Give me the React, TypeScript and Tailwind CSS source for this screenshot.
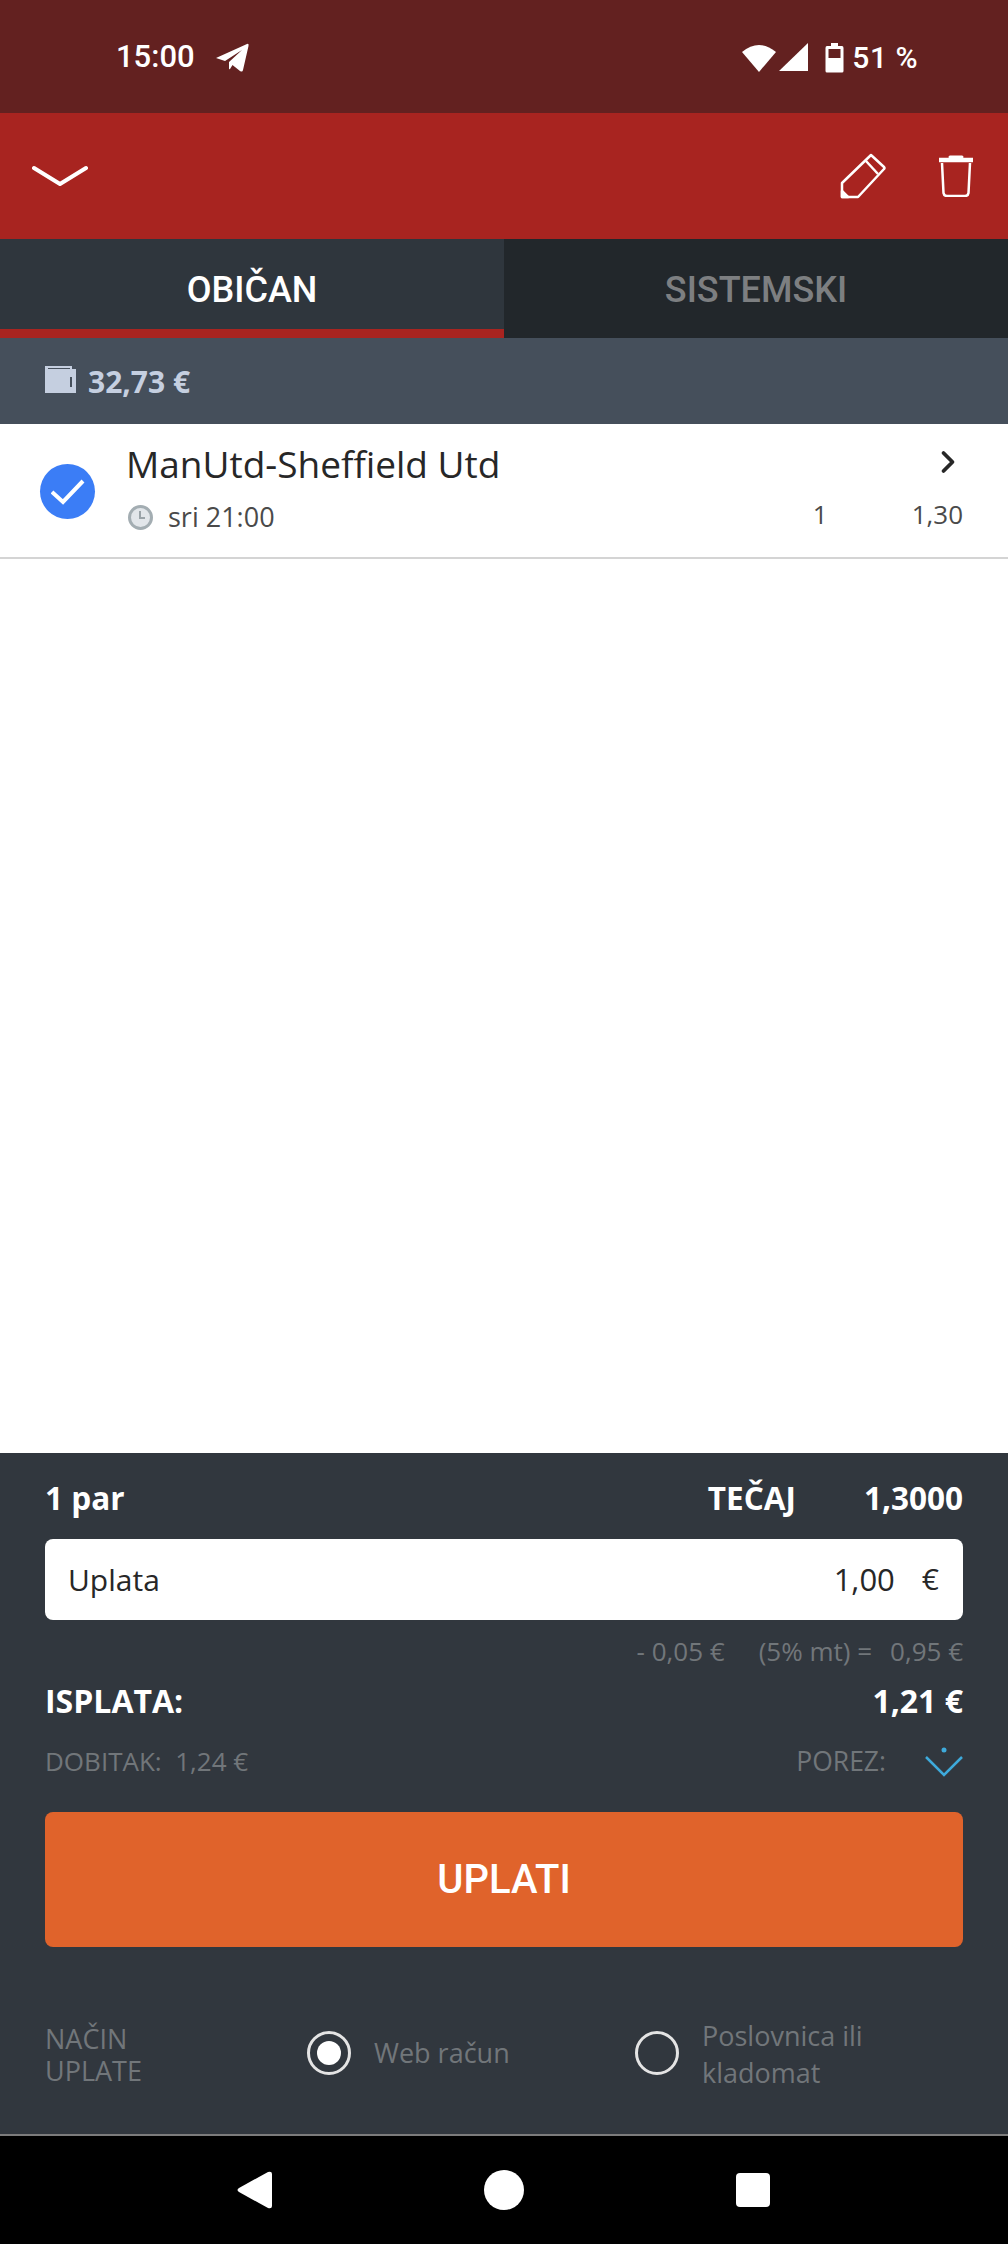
import { ChevronRight } from "lucide-react";

const openSans = "font-['Open_Sans',sans-serif]";
const roboto = "font-['Roboto',sans-serif]";

function StatusBar() {
  return (
    <div className={`h-[113px] shrink-0 bg-[#632120] flex items-center justify-between pl-[116px] pr-[90px] pt-[2px] text-white ${roboto}`}>
      <div className="flex items-center gap-[20px]">
        <span className="text-[31px] font-medium">15:00</span>
        <svg width="34" height="30" viewBox="0 0 34 30" fill="white">
          <path d="M1 15 L32 1 Q34 0 33.500 3 L28 27 Q27.500 29.500 25 28 L17.500 22 L15 26 Q14 27 14 25 L14 19 L27 7 L10 18 Z" />
        </svg>
      </div>
      <div className="flex items-center">
        <svg width="36" height="30" viewBox="0 0 36 30" fill="white">
          <path d="M0 9 Q17 -5 34 9 L17 29 Z" />
        </svg>
        <svg className="ml-[1px]" width="30" height="29" viewBox="0 0 30 29" fill="white">
          <path d="M29 0 L29 28 L0 28 Z" />
        </svg>
        <svg className="ml-[16px]" width="19" height="30" viewBox="0 0 19 30" fill="white">
          <path fillRule="evenodd" d="M6 0 H13 V3 H17 Q18.500 3 18.500 5 V28 Q18.500 29.500 17 29.500 H2 Q0.500 29.500 0.500 28 V5 Q0.500 3 2 3 H6 Z M3.500 6 V15 H15.500 V6 Z" />
        </svg>
        <span className="ml-[8px] text-[30px] font-medium tracking-[0.5px]">51 %</span>
      </div>
    </div>
  );
}

function Header() {
  return (
    <div className="h-[126px] shrink-0 bg-[#a82420] flex items-center justify-between pl-[32px] pr-[35px]">
      <svg width="56" height="22" viewBox="0 0 56 22" fill="none" stroke="white" strokeWidth="4" strokeLinecap="round" strokeLinejoin="round">
        <path d="M2 3 L28 19 L54 3" />
      </svg>
      <div className="flex items-center gap-[53px]">
        <svg width="46" height="46" viewBox="0 0 46 46" fill="none" stroke="white" strokeWidth="2.500" strokeLinejoin="round">
          <path d="M31 2 L44 14 Q45 15 44 16 L18 44 L2 44 L2 30 Z" />
          <path d="M26 8 L38 21" />
          <path d="M2 38 L8 44 L2 44 Z" fill="white" />
        </svg>
        <svg width="34" height="42" viewBox="0 0 34 42" fill="none" stroke="white" strokeWidth="2.500">
          <path d="M0 5 H34" strokeWidth="4.500" />
          <path d="M11 2 H23" strokeWidth="3" strokeLinecap="round" />
          <path d="M3 8 L4.500 38 Q5 41 8 41 H26 Q29 41 29.500 38 L31 8" />
        </svg>
      </div>
    </div>
  );
}

function Tabs() {
  return (
    <div className={`h-[99px] shrink-0 flex text-[36px] font-medium ${roboto}`}>
      <div className="w-1/2 bg-[#2f363d] border-b-[9px] border-[#a82420] text-white flex items-center justify-center pt-[11px]">
        OBIČAN
      </div>
      <div className="w-1/2 bg-[#22272b] text-[#7d7f81] flex items-center justify-center pt-[3px]">SISTEMSKI</div>
    </div>
  );
}

function WalletBar() {
  return (
    <div className={`h-[86px] shrink-0 bg-[#454f5b] flex items-center pl-[45px] gap-[12px] text-[#c5cfe0] ${openSans}`}>
      <svg width="31" height="27" viewBox="0 0 31 27" fill="currentColor" className="mb-[3px]">
        <path fillRule="evenodd" d="M0 0 H27 V3 H31 V27 H0 Z M3 2 V3 H25 V2 Z M25 11 V21 H27 V11 Z" />
      </svg>
      <span className="text-[30px] font-bold">32,73 €</span>
    </div>
  );
}

function MatchRow() {
  return (
    <div className={`h-[135px] shrink-0 bg-white border-b-2 border-[#d4d4d4] flex pl-[40px] pr-[45px] ${openSans}`}>
      <div className="mt-[40px] w-[55px] h-[55px] rounded-full bg-[#3b7df6] flex items-center justify-center shrink-0">
        <svg width="34" height="26" viewBox="0 0 34 26" fill="none" stroke="white" strokeWidth="4">
          <path d="M1 13 L12 23 L32 2" />
        </svg>
      </div>
      <div className="ml-[31px] flex-1 flex flex-col">
        <div className="flex justify-between items-center mt-[15px]">
          <span className="text-[37px] font-medium leading-[50px] text-[#272727]">ManUtd-Sheffield Utd</span>
          <ChevronRight className="w-[36px] h-[36px] text-[#272727] mb-[4px] -mr-[3px]" strokeWidth={2.500} />
        </div>
        <div className="flex items-center mt-[10px] text-[27px] text-[#4a4a4a]">
          <span className="w-[25px] h-[25px] rounded-full border-[3px] border-[#a3adb2] bg-[#e2e6ea] relative ml-[2px]">
            <span className="absolute left-[8px] top-[3px] w-[6px] h-[8px] border-l-2 border-b-2 border-[#9aa3a8]" />
          </span>
          <span className="ml-[15px] leading-[36px]">sri 21:00</span>
          <span className="ml-auto text-[26px] -mt-[5px]">1</span>
          <span className="ml-[84px] text-[26px] -mt-[5px]">1,30</span>
        </div>
      </div>
    </div>
  );
}

function Radio({ checked }: { checked?: boolean }) {
  return (
    <span className="w-[44px] h-[44px] rounded-full border-[3px] border-[#e4e4e4] flex items-center justify-center shrink-0">
      {checked && <span className="w-[24px] h-[24px] rounded-full bg-white" />}
    </span>
  );
}

function BetPanel() {
  return (
    <div className={`h-[683px] shrink-0 bg-[#31373e] px-[45px] border-b-2 border-[#7c7c7c] ${openSans}`}>
      <div className="flex justify-between items-center text-white text-[31.500px] font-bold h-[46px] mt-[22px]">
        <span>1 par</span>
        <div className="flex gap-[68px]">
          <span>TEČAJ</span>
          <span>1,3000</span>
        </div>
      </div>
      <div className="mt-[18px] h-[81px] bg-white rounded-[8px] flex items-center justify-between pl-[23px] pr-[24px] text-[#272727] text-[30px]">
        <span>Uplata</span>
        <div className="flex gap-[27px]">
          <span className="text-[31px]">1,00</span>
          <span>€</span>
        </div>
      </div>
      <div className="mt-[15px] h-[32px] flex justify-end items-center text-[26px] text-[#71767a]">
        <span>- 0,05 €</span>
        <span className="ml-[34px]">(5% mt) =</span>
        <span className="ml-[18px]">0,95 €</span>
      </div>
      <div className="mt-[14px] h-[40px] flex justify-between items-center text-white text-[32px] font-bold">
        <span>ISPLATA:</span>
        <span>1,21 €</span>
      </div>
      <div className="mt-[20px] h-[40px] flex justify-between items-center text-[26px] text-[#71767a]">
        <span>DOBITAK:&nbsp; 1,24 €</span>
        <div className="flex items-center gap-[39px]">
          <span className="text-[26.500px] mt-[2px]">POREZ:</span>
          <svg width="38" height="30" viewBox="0 0 38 30" fill="none" stroke="#3eaadb" strokeWidth="2.500" className="mt-[2px]">
            <circle cx="19" cy="3" r="2.500" fill="#3eaadb" stroke="none" />
            <path d="M1 10 L19 28 L37 10" />
          </svg>
        </div>
      </div>
      <button className={`mt-[31px] w-full h-[135px] bg-[#e0632b] rounded-[8px] text-white text-[40px] font-medium ${roboto}`}>
        UPLATI
      </button>
      <div className="mt-[68px] flex items-center text-[27px] text-[#71767a]">
        <span className="w-[262px] leading-[32px] mt-[3px]">
          NAČIN
          <br />
          UPLATE
        </span>
        <div className="flex items-center w-[328px]">
          <Radio checked />
          <span className="ml-[23px]">Web račun</span>
        </div>
        <div className="flex items-center">
          <Radio />
          <span className="ml-[23px] leading-[37px] mt-[2px]">
            Poslovnica ili
            <br />
            kladomat
          </span>
        </div>
      </div>
    </div>
  );
}

function NavBar() {
  return (
    <div className="flex-1 bg-black flex items-center">
      <div className="w-[336px] flex justify-end pr-[63px]">
        <svg width="36" height="38" viewBox="0 0 36 38" fill="white">
          <path d="M2 17 L31 1 Q35 0 35 3 V35 Q35 38 31 37 L2 21 Q-1 19 2 17 Z" />
        </svg>
      </div>
      <div className="w-[336px] flex justify-center">
        <span className="w-[40px] h-[40px] rounded-full bg-white" />
      </div>
      <div className="w-[336px] flex pl-[64px]">
        <span className="w-[34px] h-[34px] rounded-[4px] bg-white" />
      </div>
    </div>
  );
}

export default function App() {
  return (
    <div className="w-[1008px] h-[2244px] flex flex-col bg-white overflow-hidden">
      <StatusBar />
      <Header />
      <Tabs />
      <WalletBar />
      <MatchRow />
      <div className="h-[894px] shrink-0 bg-white" />
      <BetPanel />
      <NavBar />
    </div>
  );
}
